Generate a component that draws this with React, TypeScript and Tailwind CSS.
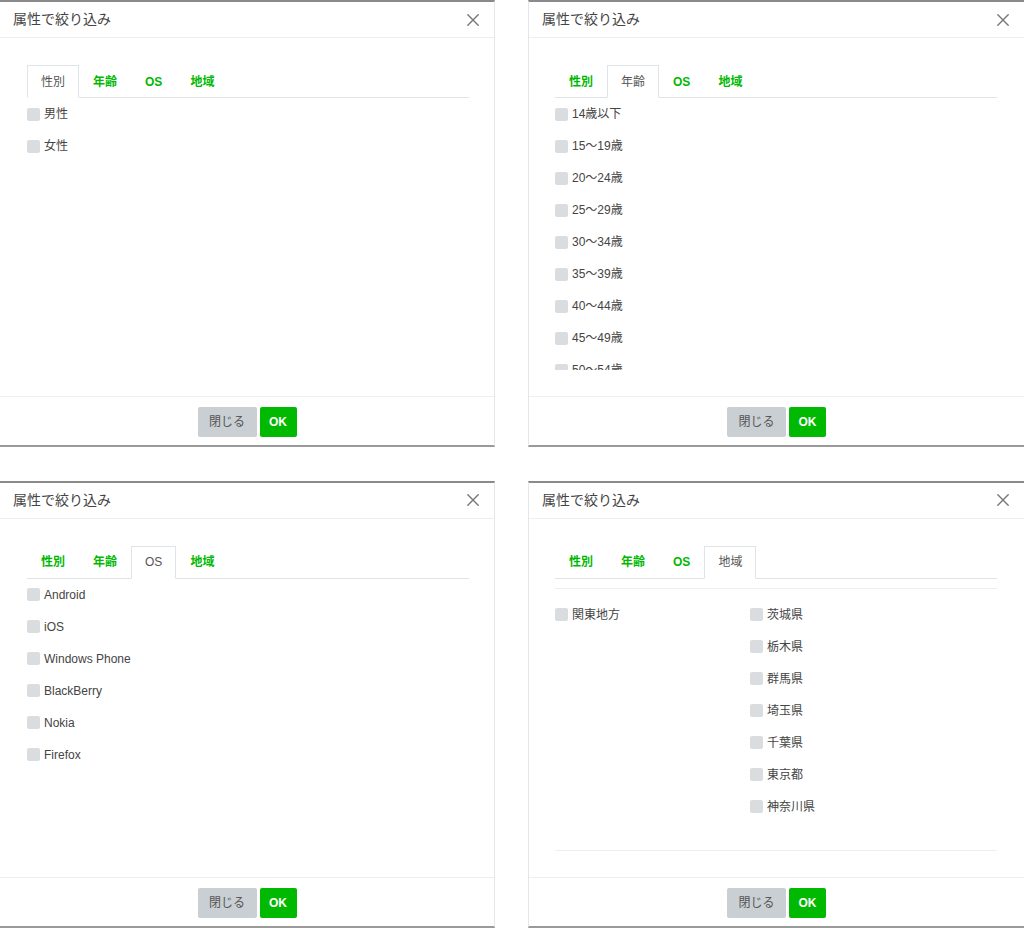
import React from "react";

const TABS = ["性別", "年齢", "OS", "地域"];

function CloseIcon() {
  return (
    <svg width="12" height="12" viewBox="0 0 12 12" fill="none">
      <path d="M0.8 0.8L11.2 11.2M11.2 0.8L0.8 11.2" stroke="#777" strokeWidth="1.4" strokeLinecap="round" />
    </svg>
  );
}

function Check({ label }: { label: string }) {
  return (
    <div className="flex h-[32px] items-center">
      <span className="h-[13px] w-[13px] shrink-0 rounded-[2px] bg-[#dadddf]" />
      <span className="ml-[4px] text-[12px] leading-none text-[#444]">{label}</span>
    </div>
  );
}

function Panel({
  side,
  active,
  children,
}: {
  side: "left" | "right";
  active: number;
  children: React.ReactNode;
}) {
  return (
    <div
      className={
        "flex h-[447px] flex-col border-t-2 border-b-2 border-t-[#8a8a8a] border-b-[#9a9a9a] bg-white " +
        (side === "left" ? "w-[495px] border-r border-r-[#e6e6e6]" : "w-[496px] border-l border-l-[#e6e6e6]")
      }
    >
      <div className="flex h-[36px] shrink-0 items-center justify-between border-b border-[#eeeeee] pl-[13px] pr-[15px]">
        <span className="text-[14px] text-[#444]">属性で絞り込み</span>
        <CloseIcon />
      </div>
      <div
        className={
          "flex h-[358px] shrink-0 flex-col pt-[27px] " +
          (side === "left" ? "pl-[27px] pr-[25px]" : "pl-[26px] pr-[27px]")
        }
      >
        <div className="flex border-b border-[#dfe5e7]">
          {TABS.map((t, i) => (
            <div
              key={t}
              className={
                "-mb-px flex h-[33px] items-center border px-[13px] text-[12px] " +
                (i === active
                  ? "border-[#dfe5e7] border-b-white bg-white text-[#555]"
                  : "border-transparent font-semibold text-[#00b900]")
              }
            >
              {t}
            </div>
          ))}
        </div>
        {children}
      </div>
      <div className="flex h-[49px] shrink-0 justify-center gap-[3px] border-t border-[#eeeeee] pt-[10px]">
        <button className="flex h-[30px] w-[59px] items-center justify-center rounded-[2px] bg-[#cacfd3] text-[12px] text-[#555]">
          閉じる
        </button>
        <button className="flex h-[30px] w-[37px] items-center justify-center rounded-[2px] bg-[#00b900] text-[12px] font-bold text-white">
          OK
        </button>
      </div>
    </div>
  );
}

function List({ items }: { items: string[] }) {
  return (
    <div className="h-[272px] overflow-hidden">
      {items.map((l) => (
        <Check key={l} label={l} />
      ))}
    </div>
  );
}

export default function App() {
  const ages = [
    "14歳以下",
    "15〜19歳",
    "20〜24歳",
    "25〜29歳",
    "30〜34歳",
    "35〜39歳",
    "40〜44歳",
    "45〜49歳",
    "50〜54歳",
  ];
  const os = ["Android", "iOS", "Windows Phone", "BlackBerry", "Nokia", "Firefox"];
  const prefs = ["茨城県", "栃木県", "群馬県", "埼玉県", "千葉県", "東京都", "神奈川県"];
  return (
    <div
      className="grid h-[928px] w-[1024px] grid-cols-[495px_496px] gap-x-[33px] gap-y-[33px] bg-white"
      style={{ fontFamily: '"Liberation Sans", "Noto Sans CJK JP", sans-serif' }}
    >
      <Panel side="left" active={0}>
        <List items={["男性", "女性"]} />
      </Panel>
      <Panel side="right" active={1}>
        <List items={ages} />
      </Panel>
      <Panel side="left" active={2}>
        <List items={os} />
      </Panel>
      <Panel side="right" active={3}>
        <div className="mt-[9px] grid h-[263px] grid-cols-[195px_1fr] border-y border-[#eceff0] pt-[10px]">
          <div>
            <Check label="関東地方" />
          </div>
          <div>
            {prefs.map((p) => (
              <Check key={p} label={p} />
            ))}
          </div>
        </div>
      </Panel>
    </div>
  );
}
